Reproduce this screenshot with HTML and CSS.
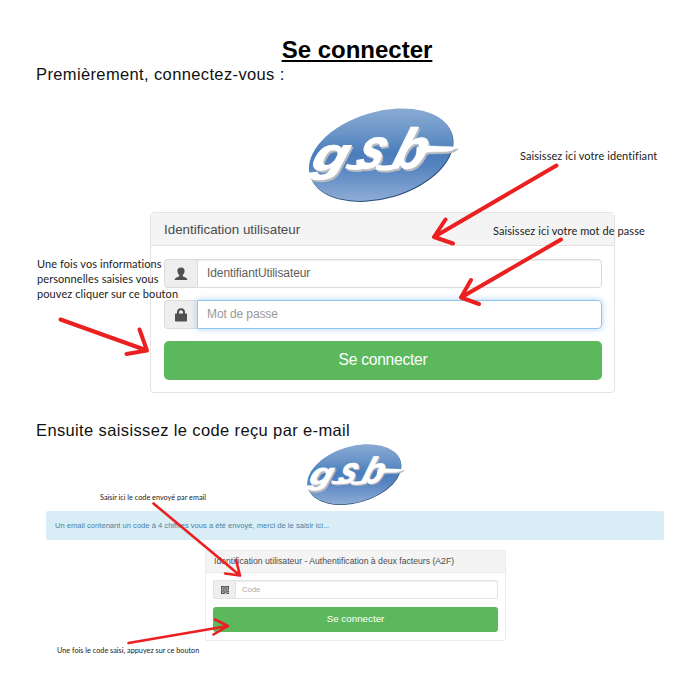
FILE: index.html
```html
<!DOCTYPE html>
<html lang="fr">
<head>
<meta charset="utf-8">
<title>Se connecter</title>
<link rel="stylesheet" href="styles.css">
</head>
<body>
<main class="page">
  <h1 class="title">Se connecter</h1>
  <p class="intro">Premièrement, connectez-vous :</p>

  <section class="figure figure-login">
    <svg class="logo" viewBox="0 0 154 100" role="img" aria-label="gsb">
      <defs>
        <linearGradient id="blue" gradientUnits="userSpaceOnUse" x1="0" y1="3" x2="0" y2="98" gradientTransform="rotate(16.3 76 50)">
          <stop offset="0" stop-color="#8aabd3"/>
          <stop offset=".25" stop-color="#6d97c9"/>
          <stop offset=".48" stop-color="#4a7dbb"/>
          <stop offset=".62" stop-color="#5584c0"/>
          <stop offset="1" stop-color="#91aed7"/>
        </linearGradient>
        <g id="word">
          <text class="word" transform="translate(4 65) skewX(-16) scale(1.250 1)" font-size="46">g</text>
          <text class="word" transform="translate(48 63) skewX(-18) scale(.9 1.050)" font-size="54">s</text>
          <text class="word" transform="translate(84 63) skewX(-17) scale(.95 1)" font-size="56">b</text>
          <path class="join" d="M40 61Q48 64 58 61M70 62Q82 65 92 60"/>
          <path class="tail" d="M111 42Q118 41 125 41L151 42Q147 46 140 46.500L122 47Q114 49 110 52z"/>
        </g>
        <g id="gsb">
          <ellipse cx="75.500" cy="50.700" rx="74" ry="43" transform="rotate(-16.3 75.500 50.700)" fill="#294d7a"/>
          <ellipse cx="75" cy="49.700" rx="74" ry="43" transform="rotate(-16.3 75 49.700)" fill="url(#blue)"/>
          <use class="word-shadow" href="#word" x="1.500" y="2"/>
          <use class="word-face" href="#word"/>
        </g>
      </defs>
      <use href="#gsb"/>
    </svg>

    <div class="panel">
      <div class="panel-heading">Identification utilisateur</div>
      <div class="panel-body">
        <div class="field">
          <span class="addon">
            <svg class="icon" viewBox="0 0 14 14"><path d="M7 .5C4.500.5 3.300 2 3.400 4c.1 1.700.8 3 1.900 3.900 0 1-.2 1.500-1 1.900C2.500 10.600.6 11 .6 13h12.800c0-2-1.900-2.400-3.700-3.200-.8-.4-1-.9-1-1.900C9.800 7 10.500 5.700 10.600 4c.1-2-1.100-3.500-3.600-3.500z"/></svg>
          </span>
          <span class="input">IdentifiantUtilisateur</span>
        </div>
        <div class="field">
          <span class="addon">
            <svg class="icon" viewBox="0 0 14 14"><path fill-rule="evenodd" d="M3 5.500V4.300a4 4 0 0 1 8 0V5.500h1.300q.7 0 .7.7v6.500q0 .7-.7.7H1.700q-.7 0-.7-.7V6.200q0-.7.7-.7zM5 5.500h4V4.300a2 2 0 0 0-4 0z"/></svg>
          </span>
          <span class="input input-focus">Mot de passe</span>
        </div>
        <div class="button">Se connecter</div>
      </div>
    </div>
  </section>

  <p class="intro intro-next">Ensuite saisissez le code reçu par e-mail</p>

  <section class="figure figure-code">
    <svg class="logo" viewBox="0 0 154 100" role="img" aria-label="gsb"><use href="#gsb"/></svg>
    <div class="alert">Un email contenant un code à 4 chiffres vous a été envoyé, merci de le saisir ici...</div>
    <div class="panel">
      <div class="panel-heading">Identification utilisateur - Authentification à deux facteurs (A2F)</div>
      <div class="panel-body">
        <div class="field">
          <span class="addon">
            <svg class="icon" viewBox="0 0 9 9"><path fill-rule="evenodd" d="M0 0h4v4H0zM1 1v2h2V1zM5 0h4v4H5zM6 1v2h2V1zM0 5h4v4H0zM1 6v2h2V6zM5 5h2v1H6v2H5zM8 5h1v2H7V6h1zM7 8h2v1H7z"/><path opacity=".4" d="M0 0h9v9H0z"/></svg>
          </span>
          <span class="input">Code</span>
        </div>
        <div class="button">Se connecter</div>
      </div>
    </div>
  </section>

  <div class="note note-id">Saisissez ici votre identifiant</div>
  <div class="note note-password">Saisissez ici votre mot de passe</div>
  <div class="note note-button">Une fois vos informations<br>personnelles saisies vous<br>pouvez cliquer sur ce bouton</div>
  <div class="note note-small note-code">Saisir ici le code envoyé par email</div>
  <div class="note note-small note-submit">Une fois le code saisi, appuyez sur ce bouton</div>

  <svg class="arrows" viewBox="0 0 685 679">
    <g class="arrow">
      <path d="M556.500 165.500L434 237M445.500 219.500L434 237L453 243.500"/>
      <path d="M561 239.500L461 297.500M471 280L461 297.500L479 304"/>
      <path d="M60.500 319.500L147 350.500M139.500 329.500L147 350.500L126.500 354"/>
    </g>
    <g class="arrow arrow-thin">
      <path d="M153.500 503.500L240 575.500M236 560L240 575.500L225 573.500"/>
      <path d="M128.500 643L228 626M215 619.500L228 626L213.500 634.500"/>
    </g>
  </svg>
</main>
</body>
</html>
```
FILE: styles.css
```css
* { box-sizing: border-box; }

body {
  margin: 0;
  background: #fff;
  font-family: "Liberation Sans", Arial, sans-serif;
}

.page {
  position: relative;
  width: 685px;
  height: 679px;
  overflow: hidden;
  padding: 36px 0 0 36px;
  white-space: nowrap;
}

.title {
  width: 642px;
  margin: 0;
  font-size: 24px;
  line-height: 28px;
  text-align: center;
  text-decoration: underline;
  text-decoration-thickness: 2px;
  text-underline-offset: 2px;
}

.intro {
  margin: 0;
  font-size: 16.500px;
  line-height: 20px;
  letter-spacing: 0.370px;
  color: #111;
}

.figure {
  display: flex;
  flex-direction: column;
}

.logo { display: block; flex: none; overflow: visible; }
.word {
  font-family: "Liberation Sans", Arial, sans-serif;
  font-style: italic;
  font-weight: 700;
  stroke-width: 1.200;
}
.join { fill: none; stroke-width: 5; }
.tail { stroke-width: .5; }
.word-face { fill: #fff; stroke: #fff; }
.word-shadow { fill: #b9bcc2; stroke: #b9bcc2; }

.figure-login { padding: 21px 0 0 114px; }
.figure-login .logo { width: 154px; height: 100px; margin-left: 156px; }

.panel {
  border: 1px solid #e3e3e3;
  border-radius: 4px;
  color: #4b4b4b;
}
.panel-heading {
  background: #f4f4f4;
  border-bottom: 1px solid #e3e3e3;
}
.panel-body { display: flex; flex-direction: column; }
.field { display: flex; }
.addon {
  display: flex;
  align-items: center;
  justify-content: center;
  background: #eee;
  border: 1px solid #dcdcdc;
  border-right: 0;
  border-radius: 4px 0 0 4px;
}
.icon { display: block; fill: #505050; }
.input {
  flex: 1;
  border: 1px solid #dadada;
  border-radius: 0 4px 4px 0;
  box-shadow: inset 0 1px 1px rgba(0, 0, 0, .07);
  color: #606060;
}
.input-focus {
  border-color: #8fc5f2;
  box-shadow: 0 0 6px rgba(102, 175, 233, .55);
  color: #999;
}
.button {
  background: #5cb85c;
  color: #fff;
  text-align: center;
}

.figure-login .panel { width: 465px; height: 181px; margin-top: 7px; }
.figure-login .panel-heading { height: 33px; padding-left: 13px; font-size: 13.400px; line-height: 33px; }
.figure-login .panel-body { gap: 12px; padding: 13px 12px 0 13px; }
.figure-login .field { height: 29px; }
.figure-login .addon { width: 33px; }
.figure-login .icon { width: 14px; height: 14px; }
.figure-login .input { padding-left: 9px; font-size: 12px; line-height: 27px; letter-spacing: -0.100px; }
.figure-login .button { height: 39px; border-radius: 5px; font-size: 15.600px; line-height: 38px; letter-spacing: -0.250px; }

.intro-next { margin-top: 27px; }

.figure-code { padding: 2px 0 0 10px; }
.figure-code .logo { width: 101px; height: 65px; margin-left: 259px; }
.alert {
  width: 618px;
  height: 29px;
  margin-top: 4px;
  padding-left: 9px;
  border-radius: 2px;
  background: #d9edf7;
  color: #4c829f;
  font-size: 7.600px;
  line-height: 29px;
}
.figure-code .panel { width: 301px; height: 91px; margin: 10px 0 0 159px; border-color: #ececec; border-radius: 2px; }
.figure-code .panel-heading { height: 22px; padding-left: 8px; font-size: 8.660px; line-height: 21px; border-color: #ececec; }
.figure-code .panel-body { gap: 8px; padding: 7px 7px 0 7px; }
.figure-code .field { height: 19px; }
.figure-code .addon { width: 22px; border-color: #e2e2e2; border-radius: 2px 0 0 2px; }
.figure-code .icon { width: 8px; height: 8px; }
.figure-code .input { padding-left: 6px; border-color: #e2e2e2; border-radius: 0 2px 2px 0; font-size: 7.700px; line-height: 17px; color: #aaa; }
.figure-code .button { height: 25px; border-radius: 3px; font-size: 9.800px; line-height: 24px; }

.note {
  position: absolute;
  font-family: "Lato", sans-serif;
  font-size: 11px;
  line-height: 15px;
  letter-spacing: 0.080px;
  color: #222;
}
.note-small {
  line-height: 16px;
  letter-spacing: 0;
  transform: scale(.662, .7);
  transform-origin: 0 0;
}
.note-id { left: 520px; top: 148px; }
.note-password { left: 493px; top: 223px; }
.note-button { left: 37px; top: 256px; }
.note-code { left: 100px; top: 492px; }
.note-submit { left: 57px; top: 645px; }

.arrows {
  position: absolute;
  left: 0;
  top: 0;
  width: 685px;
  height: 679px;
}
.arrow {
  fill: none;
  stroke: #eb2021;
  stroke-width: 4;
  stroke-linecap: round;
  stroke-linejoin: round;
}
.arrow-thin { stroke-width: 2.600; }
```
